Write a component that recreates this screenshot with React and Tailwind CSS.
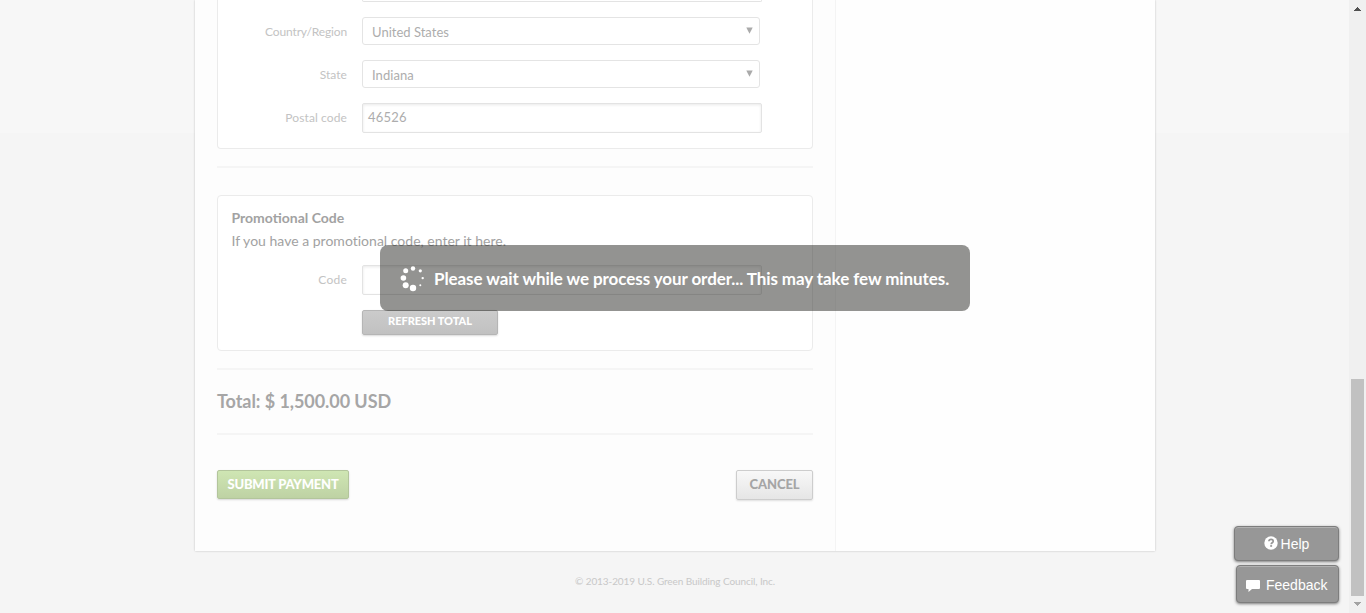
import React from "react";

function Label({ children }) {
  return (
    <div className="w-[129px] shrink-0 text-right text-[12px] text-[#c3c3c3]">{children}</div>
  );
}

function SelectRow({ label, value, tracking }) {
  return (
    <div className="flex h-7 items-center">
      <div className="pt-[2px]">
        <Label>{label}</Label>
      </div>
      <div className="ml-[15px] flex h-7 w-[398px] items-center justify-between rounded-[3px] border border-[#e4e4e4] bg-white pt-[4px] pr-[6px] pl-[9px] text-[13px] text-[#adadad]">
        <span className={tracking}>{value}</span>
        <svg width="7" height="7" viewBox="0 0 7 7" className="-mt-[5px]">
          <path d="M0.3 0.5H6.7L3.5 6.7Z" fill="#aaaaaa" />
        </svg>
      </div>
    </div>
  );
}

function TextInput({ children }) {
  return (
    <div className="ml-[15px] flex h-[30px] w-[400px] items-center rounded-[2px] border border-[#e3e3e3] bg-white pl-[5px] text-[13px] text-[#adadad] shadow-[inset_0_1px_3px_rgba(0,0,0,0.09)]">
      {children}
    </div>
  );
}

function Divider() {
  return <div className="h-[2px] bg-[#f5f5f5]" />;
}

function Spinner() {
  const dots = [
    [13, 3.5, 2.2],
    [20.3, 5.8, 1.6],
    [22.7, 13.1, 1.2],
    [20.3, 20.3, 1],
    [13, 23, 3.2],
    [5.7, 20.2, 3],
    [3.4, 13, 2.8],
    [5.7, 5.7, 2.5],
  ];
  return (
    <svg width="26" height="27" viewBox="0 0 26 27" fill="#fff">
      {dots.map(([x, y, r], i) => (
        <circle key={i} cx={x} cy={y} r={r} />
      ))}
    </svg>
  );
}

export default function App() {
  return (
    <div className="relative flex h-[613px] w-[1366px] overflow-hidden bg-[#f5f5f5] font-['Lato',sans-serif]">
      <div className="flex w-[1349px] flex-col items-center bg-[linear-gradient(#f7f7f7_0,#f7f7f7_133px,#f5f5f5_133px)] pl-px">
        <main className="flex h-[551px] w-[960px] shrink-0 bg-[#fefefe] shadow-[0_0_2px_rgba(0,0,0,0.22)]">
          <div className="w-[641px] border-r border-[#f4f4f4] bg-[#fdfdfd] pr-[22px] pl-[22px]">
            <section className="flex h-[149px] flex-col rounded-b-[4px] border border-t-0 border-[#ebebeb] bg-white">
              <div className="mb-[15px] ml-[144px] h-[2px] w-[400px] rounded-b-[2px] border border-t-0 border-[#e3e3e3]" />
              <div className="flex flex-col gap-[15px]">
                <SelectRow
                  label={<span className="tracking-[-0.14px]">Country/Region</span>}
                  value="United States"
                  tracking="tracking-[0.01px]"
                />
                <SelectRow label={<span className="tracking-[0.05px]">State</span>} value="Indiana" tracking="tracking-[0.05px]" />
                <div className="flex items-center">
                  <Label><span className="tracking-[0.1px]">Postal code</span></Label>
                  <TextInput><span className="tracking-[0.2px]">46526</span></TextInput>
                </div>
              </div>
            </section>
            <div className="pt-[17px]">
              <Divider />
            </div>

            <section className="mt-[27px] h-[156px] rounded-[4px] border border-[#ebebeb] bg-white">
              <div className="pt-[11px] pl-[13.5px] text-[14px] leading-[22px] text-[#a2a2a2]">
                <h2 className="font-bold"><span className="tracking-[0px]">Promotional Code</span></h2>
                <p className="mt-px"><span className="tracking-[0.01px]">If you have a promotional code, enter it here.</span></p>
              </div>
              <div className="mt-[13px] flex items-center">
                <Label><span className="tracking-[0.25px]">Code</span></Label>
                <TextInput />
              </div>
              <button className="mt-[15px] ml-[144px] flex h-[25px] w-[136px] items-center justify-center rounded-[2px] border border-[#b5b5b5] bg-linear-to-b from-[#cbcbcb] to-[#c1c1c1] pb-[2px] text-[11px] font-black text-white shadow-[0_1px_2px_rgba(0,0,0,0.15)]">
                <span className="tracking-[-0.05px]">REFRESH TOTAL</span>
              </button>
            </section>

            <div className="pt-[17px]">
              <Divider />
            </div>
            <div className="flex h-[63px] items-center text-[18px] font-bold text-[#a6a6a6]">
              <span className="tracking-[-0.06px]">Total: $ 1,500.00 USD</span>
            </div>
            <Divider />
            <div className="mt-[35px] flex items-start justify-between text-[13px]">
              <button className="flex h-[29px] w-[132px] items-center justify-center rounded-[2px] border border-[#b3c59c] bg-linear-to-b from-[#cfe6b3] to-[#bed2a4] pt-px font-black text-white shadow-[0_1px_2px_rgba(0,0,0,0.15)]">
                <span className="tracking-[-0.23px]">SUBMIT PAYMENT</span>
              </button>
              <button className="flex h-[30px] w-[77px] items-center justify-center rounded-[2px] border border-[#cdcdcd] bg-linear-to-b from-[#f8f8f8] to-[#e6e6e6] font-black text-[#a5a5a5] shadow-[0_1px_2px_rgba(0,0,0,0.12)]">
                <span className="tracking-[-0.1px]">CANCEL</span>
              </button>
            </div>
          </div>
        </main>
        <footer className="mt-[23px] text-[10px] leading-[15px] text-[#c8c8c8]">
          <span className="tracking-[-0.09px]">© 2013-2019 U.S. Green Building Council, Inc.</span>
        </footer>
      </div>

      <div className="flex w-[17px] flex-col items-center justify-between bg-[#f0f0f0] pt-[7px] pb-[7px]">
        <svg width="7" height="4" viewBox="0 0 7 4" shapeRendering="crispEdges">
          <path d="M3 0h1v1h1v1h1v1h1v1H0V3h1V2h1V1h1z" fill="#505050" />
        </svg>
        <div className="mt-auto mb-[6px] h-[217px] w-[13px] bg-[#c1c1c1]" />
        <svg width="7" height="4" viewBox="0 0 7 4" shapeRendering="crispEdges">
          <path d="M0 0h7v1H6v1H5v1H4v1H3V3H2V2H1V1H0z" fill="#a3a3a3" />
        </svg>
      </div>

      <div className="absolute top-[245px] left-[380px] flex h-[66px] w-[590px] items-center rounded-[8px] bg-[rgba(40,40,36,0.5)] pl-[20px] text-[17px] font-bold text-white">
        <Spinner />
        <span className="ml-[8px] pt-[2px] tracking-[-0.08px] whitespace-nowrap">
          Please wait while we process your order... This may take few minutes.
        </span>
      </div>

      <div className="absolute top-[526px] left-[1234px] flex w-[105px] flex-col items-end gap-[4px] font-['Liberation_Sans',Arial,sans-serif] text-[14px] text-white">
        <button className="flex h-[35px] w-[105px] items-center justify-center gap-[3px] rounded-[4px] border border-[#7d7d7d] bg-[#979797] shadow-[inset_0_1px_0_rgba(255,255,255,0.25),0_1px_3px_rgba(0,0,0,0.5)]">
          <svg width="14" height="14" viewBox="0 0 14 14" className="-mt-[2px]">
            <circle cx="7" cy="7" r="6.7" fill="#fff" />
            <path d="M4.9 5.3C5 3.9 6 3.4 7.1 3.4c1.200 0 2.100.7 2.100 1.800 0 1.500-2 1.600-2 3" fill="none" stroke="#979797" strokeWidth="1.700" />
            <rect x="6.200" y="9.100" width="1.900" height="1.700" fill="#979797" />
          </svg>
          <span className="pt-[2px]">Help</span>
        </button>
        <button className="flex h-[38px] w-[103px] items-center rounded-[4px] border border-[#7d7d7d] bg-[#979797] pl-[9px] shadow-[inset_0_1px_0_rgba(255,255,255,0.25),0_1px_3px_rgba(0,0,0,0.5)]">
          <svg width="14" height="12" viewBox="0 0 14 12" className="mt-[3px]">
            <path d="M1 0h12q1 0 1 1v7q0 1-1 1H6L2.500 12V9H1Q0 9 0 8V1Q0 0 1 0z" fill="#fff" />
          </svg>
          <span className="ml-[6px] pt-[3px]">Feedback</span>
        </button>
      </div>
    </div>
  );
}
